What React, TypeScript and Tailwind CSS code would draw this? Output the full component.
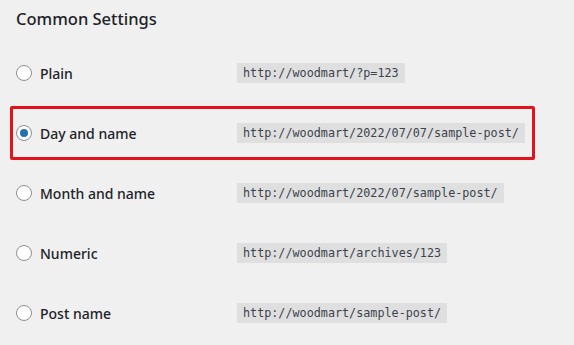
import React from 'react';

interface Option {
  label: string;
  url: string;
  checked?: boolean;
}

const options: Option[] = [
  { label: 'Plain', url: 'http://woodmart/?p=123' },
  { label: 'Day and name', url: 'http://woodmart/2022/07/07/sample-post/', checked: true },
  { label: 'Month and name', url: 'http://woodmart/2022/07/sample-post/' },
  { label: 'Numeric', url: 'http://woodmart/archives/123' },
  { label: 'Post name', url: 'http://woodmart/sample-post/' },
];

const Radio = ({ checked }: { checked?: boolean }) => (
  <span className="flex h-4 w-4 shrink-0 items-center justify-center rounded-full border border-[#8c8f94] bg-white">
    {checked && <span className="h-2 w-2 rounded-full bg-[#2271b1]" />}
  </span>
);

const RowContent = ({ opt }: { opt: Option }) => (
  <>
    <label className="flex w-[221px] shrink-0 items-center gap-2 text-[14px] font-medium text-[#1d2327]">
      <Radio checked={opt.checked} />
      {opt.label}
    </label>
    <code className="bg-[#dfdfe0] px-[6px] text-[11.75px] leading-[20px] text-[#3c434a] [font-family:'DejaVu_Sans_Mono',monospace]">
      {opt.url}
    </code>
  </>
);

export default function App() {
  return (
    <div className="h-[345px] w-[574px] overflow-hidden bg-[#f0f0f1] pl-4 [font-family:'Noto_Sans',sans-serif]">
      <h2 className="mt-2 mb-[13px] text-[16.5px] font-medium leading-[22px] text-[#1d2327]">Common Settings</h2>
      <div className="flex flex-col">
        {options.map(opt =>
          opt.checked ? (
            <div key={opt.label} className="my-[3px] -ml-[6px] flex h-[54px] w-[525px] items-center rounded-[2px] border-[3px] border-[#e3121b] pl-[3px]">
              <RowContent opt={opt} />
            </div>
          ) : (
            <div key={opt.label} className="flex h-[60px] items-center">
              <RowContent opt={opt} />
            </div>
          )
        )}
      </div>
    </div>
  );
}
